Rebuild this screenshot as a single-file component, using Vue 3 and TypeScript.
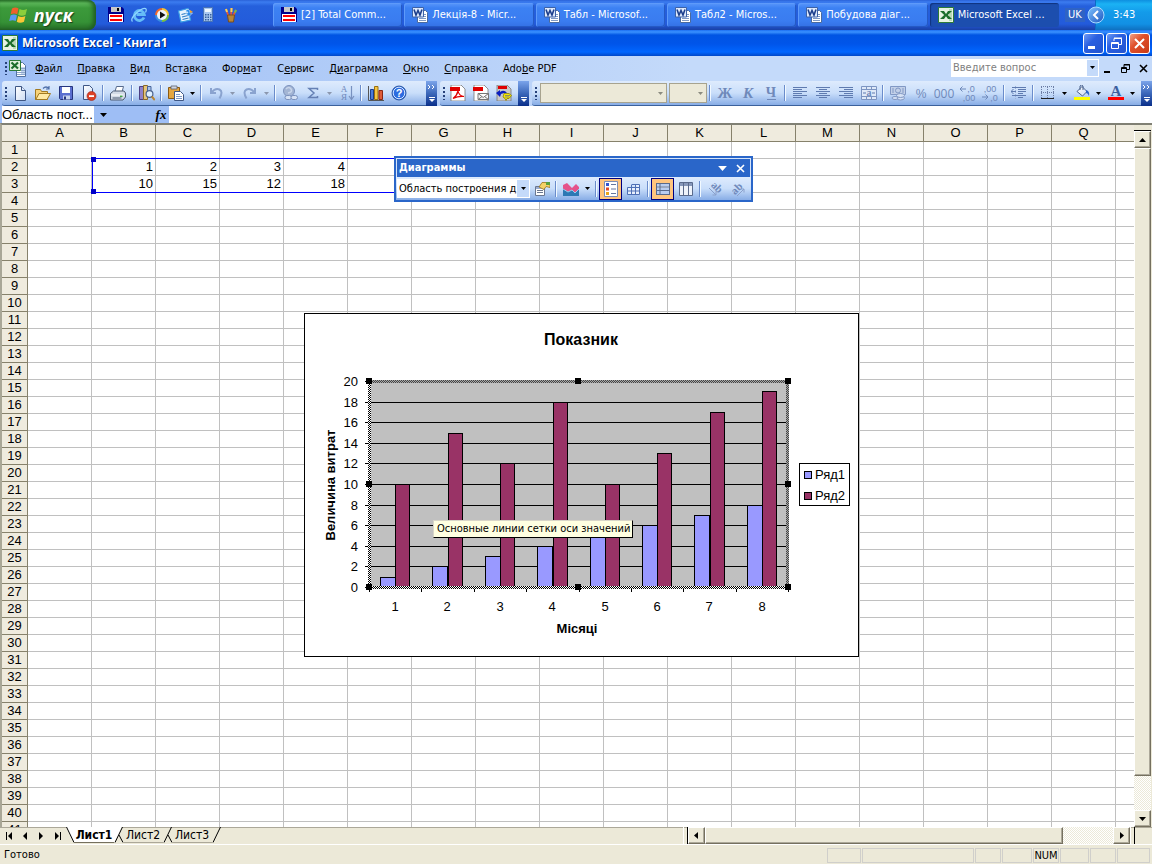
<script setup lang="ts">
import { ref } from 'vue'

interface Glyph {
  text: string
  x: number
  y: number
  size: number
  cls: string
  turn?: string
}

interface Tool {
  kind: 'icon' | 'arrow' | 'sep'
  icon?: string
  label?: string
  on?: boolean
  off?: boolean
  glyphs?: Glyph[]
}

const icon = (name: string, label: string, extra: Partial<Tool> = {}): Tool => ({ kind: 'icon', icon: name, label, ...extra })
const arrow = (label: string, off = false): Tool => ({ kind: 'arrow', label, off })
const glyph = (text: string, x: number, y: number, size: number, cls: string, turn?: string): Glyph => ({ text, x, y, size, cls, turn })
const sep: Tool = { kind: 'sep' }

const quickLaunch = [
  { icon: 'floppy', label: 'Total Commander' },
  { icon: 'ie', label: 'Internet Explorer' },
  { icon: 'media', label: 'Windows Media' },
  { icon: 'outlook', label: 'Outlook Express' },
  { icon: 'calc', label: 'Калькулятор' },
  { icon: 'paint', label: 'Paint' },
]

const tasks = [
  { icon: 'floppy', text: '[2] Total Comm...', active: false },
  { icon: 'word', text: 'Лекція-8 - Micr...', active: false },
  { icon: 'word', text: 'Табл - Microsof...', active: false },
  { icon: 'word', text: 'Табл2 - Micros...', active: false },
  { icon: 'word', text: 'Побудова діаг...', active: false },
  { icon: 'excel', text: 'Microsoft Excel ...', active: true },
]

const menus: [string, string, string][] = [
  ['', 'Ф', 'айл'],
  ['', 'П', 'равка'],
  ['', 'В', 'ид'],
  ['Вст', 'а', 'вка'],
  ['Фор', 'м', 'ат'],
  ['С', 'е', 'рвис'],
  ['Д', 'и', 'аграмма'],
  ['', 'О', 'кно'],
  ['', 'С', 'правка'],
  ['Ado', 'b', 'e PDF'],
]

const standardTools: Tool[] = [
  icon('new', 'Создать'), icon('open', 'Открыть'), icon('save', 'Сохранить'), icon('permission', 'Разрешение'), sep,
  icon('print', 'Печать'), sep, icon('research', 'Справочные материалы'), sep,
  icon('paste', 'Вставить'), arrow('Варианты вставки'), sep,
  icon('undo', 'Отменить'), arrow('Список отмены', true), icon('redo', 'Вернуть'), arrow('Список возврата', true), sep,
  icon('link', 'Гиперссылка'), icon('sum', 'Автосумма'), arrow('Функции', true),
  icon('sort', 'Сортировка', { glyphs: [glyph('А', 5, 7, 9, 'serif dim'), glyph('Я', 5, 15, 9, 'serif dim')] }), sep,
  icon('chart', 'Мастер диаграмм'), icon('help', 'Справка', { glyphs: [glyph('?', 8, 12, 11, 'sans strong white')] }),
]

const pdfTools: Tool[] = [
  icon('pdf', 'Преобразовать в PDF'), icon('pdfmail', 'Отправить PDF'), icon('pdfreview', 'Рецензировать PDF'),
]

const formatTools: Tool[] = [
  sep,
  icon('none', 'Полужирный', { glyphs: [glyph('Ж', 8, 13, 15, 'serif strong dim')] }),
  icon('none', 'Курсив', { glyphs: [glyph('К', 8, 13, 15, 'serif strong slant dim')] }),
  icon('underline', 'Подчеркнутый', { glyphs: [glyph('Ч', 8, 12, 14, 'serif strong dim')] }), sep,
  icon('left', 'По левому краю'), icon('center', 'По центру'), icon('right', 'По правому краю'),
  icon('merge', 'Объединить', { glyphs: [glyph('a', 8, 11, 10, 'serif strong dim')] }), sep,
  icon('currency', 'Денежный формат'),
  icon('none', 'Процентный формат', { glyphs: [glyph('%', 8, 13, 12, 'sans dim')] }),
  icon('none', 'Формат с разделителями', { glyphs: [glyph('000', 8, 13, 12, 'narrow dim')] }),
  icon('incdec', 'Увеличить разрядность', { glyphs: [glyph(',0', 12, 7, 9, 'sans dim'), glyph(',00', 10, 16, 9, 'sans dim')] }),
  icon('decdec', 'Уменьшить разрядность', { glyphs: [glyph(',00', 8, 7, 9, 'sans dim'), glyph(',0', 12, 16, 9, 'sans dim')] }), sep,
  icon('indent', 'Уменьшить отступ'), sep,
  icon('borders', 'Границы'), arrow('Виды границ'), icon('fill', 'Цвет заливки'), arrow('Выбор заливки'),
  icon('color', 'Цвет шрифта', { glyphs: [glyph('A', 8, 11, 15, 'serif strong navy')] }), arrow('Выбор цвета шрифта'),
]

const chartTools: Tool[] = [
  icon('format', 'Формат'), sep, icon('area', 'Тип диаграммы'), arrow('Типы'), sep,
  icon('legend', 'Легенда', { on: true }), icon('datatable', 'Таблица данных'), sep,
  icon('byrow', 'По строкам', { on: true }), icon('bycol', 'По столбцам'), sep,
  icon('textdown', 'Текст сверху вниз', { glyphs: [glyph('ab', 10, 9, 11, 'serif strong dim', 'rotate(45 9 6)')] }),
  icon('textup', 'Текст снизу вверх', { glyphs: [glyph('ab', 7, 11, 11, 'serif strong dim', 'rotate(-45 7 8)')] }),
]

const columns = 'ABCDEFGHIJKLMNOPQ'.split('')
const rowCount = 41
const cells: Record<string, number> = { B2: 1, C2: 2, D2: 3, E2: 4, B3: 10, C3: 15, D3: 12, E3: 18 }
const cell = (col: string, row: number) => cells[`${col}${row}`] ?? ''

const plot = { left: 65, top: 68, right: 484, bottom: 274 }
const series1 = [1, 2, 3, 4, 5, 6, 7, 8]
const series2 = [10, 15, 12, 18, 10, 13, 17, 19]
const ticks = [0, 2, 4, 6, 8, 10, 12, 14, 16, 18, 20]
const step = (plot.right - plot.left) / 8
const yOf = (v: number) => Math.round(plot.bottom - (v * (plot.bottom - plot.top)) / 20)
const xOf = (i: number, shift: number) => Math.round(plot.left + step * i + shift)
const handles = [0, 1, 2].flatMap((c) => [0, 1, 2].map((r) => ({
  c, r,
  x: Math.floor(plot.left + ((plot.right - plot.left) / 2) * c) - 3,
  y: Math.floor(plot.top + ((plot.bottom - plot.top) / 2) * r) - 3,
}))).filter((h) => !(h.c === 1 && h.r === 1))

const panels = [34, 112, 26, 30, 26, 29, 26, 33]
const sheets = ['Лист1', 'Лист2', 'Лист3']
const activeSheet = ref('Лист1')
const nameBox = ref('Область пост...')
</script>

<template>
  <svg class="sprite" width="0" height="0" aria-hidden="true">
    <defs>
      <linearGradient id="g-blue" x1="0" y1="0" x2="1" y2="1"><stop offset="0" stop-color="#7fc4ff" /><stop offset="1" stop-color="#1c55c0" /></linearGradient>
      <linearGradient id="g-paper" x1="0" y1="0" x2="1" y2="1"><stop offset="0" stop-color="#fff" /><stop offset="1" stop-color="#cddcf3" /></linearGradient>
    </defs>
    <symbol id="none" viewBox="0 0 16 16" />
    <symbol id="flag" viewBox="0 0 20 20">
      <path d="M3 3.500q3.500-2 6.500 0L8.200 9.300q-3-1.800-6.500 0z" fill="#f0602c" />
      <path d="M10.500 4q3.500 2 7.500 0l-1.400 5.700q-4 1.900-7.300 0z" fill="#8ccf3c" />
      <path d="M1.500 10.500q3.500-1.800 6.500 0l-1.300 5.600q-3-1.800-6.500 0z" fill="#5b98f5" />
      <path d="M9.200 11q3.300 2 7.200 0L15 16.800q-4 2-7.200 0z" fill="#fbc736" />
    </symbol>
    <symbol id="floppy" viewBox="0 0 16 16">
      <path d="M0 0h14l2 2v13H0z" fill="#00008b" /><path d="M3 0h10v5H3z" fill="#c8c8c8" /><path d="M9 1h2v3H9z" fill="#000" />
      <path d="M1 7h14v8H1z" fill="#fff" /><path d="M2 8h12v2H2zM2 12h12v2H2z" fill="#f00" />
    </symbol>
    <symbol id="ie" viewBox="0 0 16 16">
      <path d="M13 10.500a5 5 0 1 1 .3-3H5.500" fill="none" stroke="#65bdf7" stroke-width="2.800" />
      <path d="M1.500 14.500Q-1 12 5 6.500T14.500 1.500q1.500 1 0 4" fill="none" stroke="#8fd6ff" stroke-width="1.200" />
    </symbol>
    <symbol id="media" viewBox="0 0 16 16">
      <path d="M1 8a7 7 0 0 1 7-7v7z" fill="#ef6a2d" /><path d="M1 8a7 7 0 0 0 7 7V8z" fill="#3a8ee0" /><path d="M15 8a7 7 0 0 1-7 7V8z" fill="#7ac143" /><path d="M8 1a7 7 0 0 1 7 7H8z" fill="#f7c531" />
      <circle cx="8" cy="8" r="5" fill="#eef3fa" /><path d="M6 4.500v7l5.500-3.500z" fill="#111" />
    </symbol>
    <symbol id="outlook" viewBox="0 0 16 16">
      <path d="M1.500 4L11 1.500 13.500 13 4 15z" fill="#e9f4ff" stroke="#3b9fe5" stroke-width="1.200" /><path d="M4.500 7.500l6-1.500M5 10l6-1.500M5.500 12.500l6-1.500" stroke="#2f7ec5" stroke-width="1.200" />
      <path d="M9 3q4-2 4 3h2.500l-3.500 3.500L8.500 6H11q0-2-2-1z" fill="#2b8ae8" stroke="#d8eeff" stroke-width=".6" /><path d="M13 3l3 2-3 1z" fill="#f5a32a" />
    </symbol>
    <symbol id="calc" viewBox="0 0 16 16">
      <path d="M3.500.500h9v14h-9z" fill="#a9c8f0" stroke="#4a74b5" /><path d="M5 2h6v3H5z" fill="#eef8ff" />
      <path d="M5 7h1.500v1.500H5zm2.500 0H9v1.500H7.500zm2.500 0h1.500v1.500H10zM5 9.500h1.500V11H5zm2.500 0H9V11H7.500zm2.500 0h1.500V11H10zM5 12h1.500v1.500H5zm2.500 0H9v1.500H7.500zm2.500 0h1.500v1.500H10z" fill="#35609f" />
    </symbol>
    <symbol id="paint" viewBox="0 0 16 16">
      <path d="M5.500 9L3 2M8 9l.5-8M10 9l3-6" stroke="#e8573a" stroke-width="1.800" /><path d="M3 2l1 3M8.500 1v4" stroke="#f4d35b" stroke-width="2" /><path d="M13 3l-1.200 2.500" stroke="#6fbf4f" stroke-width="2" />
      <path d="M4.500 8h7l-1 7h-5z" fill="#b8863a" stroke="#7a4d1c" />
    </symbol>
    <symbol id="word" viewBox="0 0 16 16">
      <path d="M5.500 3.500h8l2 2v10h-10z" fill="#fff" stroke="#4b6a9d" /><path d="M7 11.500h7M7 13.500h7M12 7.500h2M12 9.500h2" stroke="#7e99c6" />
      <path d="M.5.500h11v9.500H.5z" fill="#dfeafc" stroke="#3c62a8" /><path d="M2 2.500l2 5.500 2-4.500L8 8l2-5.500" fill="none" stroke="#1d3f8c" stroke-width="1.600" />
    </symbol>
    <symbol id="excel" viewBox="0 0 16 16">
      <path d="M.5.500h15v15H.5z" fill="#e6f2e3" stroke="#2c7a38" /><path d="M11 2h3v12h-3z" fill="#b8d9b4" />
      <path d="M2 4h4l2 3 2-3h4L9.800 8l4.200 4h-4L8 9.300 6 12H2l4.200-4z" fill="#1c6e2c" />
    </symbol>
    <symbol id="book" viewBox="0 0 17 17">
      <path d="M7.500 2.500h6l3 3v11h-9z" fill="#fff" stroke="#51709f" /><path d="M12 7h4v8h-4z" fill="#c5d6ee" /><path d="M8 14.500h8M8 12.500h8M12 10.500h4M12 8.500h4" stroke="#8da6cb" />
      <path d="M.5.500h11v10H.5z" fill="#dff0dc" stroke="#2c7a38" /><path d="M2.500 2.500l6.500 6M9 2.500l-6.500 6" stroke="#1c6e2c" stroke-width="2.200" />
    </symbol>
    <symbol id="new" viewBox="0 0 16 16"><path d="M3.500 1.500h6l4 4v10h-10z" fill="url(#g-paper)" stroke="#3e5684" /><path d="M9.500 1.500v4h4" fill="#dce8fb" stroke="#3e5684" /></symbol>
    <symbol id="open" viewBox="0 0 16 16">
      <path d="M.5 14.500v-10h5l1 2h6v8z" fill="#f7d37a" stroke="#a27a22" /><path d="M.8 14.500L4 8.500h11.500l-3.500 6z" fill="#ffe9a4" stroke="#a27a22" /><path d="M8 3.500q3-3 6 0m0-2.500v3h-3" fill="none" stroke="#4f6fa8" stroke-width="1.200" />
    </symbol>
    <symbol id="save" viewBox="0 0 16 16">
      <path d="M1.500 1.500h13v13h-12l-1-1z" fill="#5b6fd0" stroke="#26357e" /><path d="M4 2h8v6H4z" fill="#fff" /><path d="M5 10.500h7v4H5z" fill="#c9d4ee" /><path d="M6 11.500h2v3H6z" fill="#26357e" />
    </symbol>
    <symbol id="permission" viewBox="0 0 16 16">
      <path d="M2.500.500h6l3 3v11h-9z" fill="url(#g-paper)" stroke="#3e5684" /><circle cx="10.500" cy="11" r="4.500" fill="#dd4227" stroke="#9e2410" stroke-width=".6" /><path d="M8 10.200h5v1.800H8z" fill="#fff" />
    </symbol>
    <symbol id="print" viewBox="0 0 16 16">
      <path d="M5 6.500l1.500-5h7L12 7z" fill="#fff" stroke="#576b8e" /><path d="M.5 8.500l3-2.500h10.500l1.500 2v4l-2.500 3H.5z" fill="#d3dbe6" stroke="#4a5870" /><path d="M1 10h12.500" stroke="#fff" /><path d="M2.500 13h9" stroke="#4a5870" /><path d="M10 11.300h2.500" stroke="#3fa543" stroke-width="1.400" />
    </symbol>
    <symbol id="research" viewBox="0 0 16 16">
      <path d="M.5 1.500h4v13h-4z" fill="#8f82c9" stroke="#4b3f85" /><path d="M4.500.500h4v14h-4z" fill="#e5c47c" stroke="#8a6826" /><path d="M8.500 1.500h3.500v9H8.500z" fill="#a8c3ea" stroke="#47649b" /><circle cx="10.500" cy="9" r="3.400" fill="#e0f1ff" stroke="#4b628d" stroke-width="1.200" /><path d="M12.800 11.500l3 3.500" stroke="#b98530" stroke-width="2" />
    </symbol>
    <symbol id="paste" viewBox="0 0 16 16">
      <path d="M.5 2.500h11v11H.5z" fill="#e4a640" stroke="#8a5a13" /><path d="M3 1h6v3H3z" fill="#cfd5df" stroke="#5a6170" stroke-width=".8" /><path d="M6.500 6.500h6l3 3v6h-9z" fill="#fff" stroke="#3e5684" /><path d="M8 9.500h4M8 11.500h6M8 13.500h6" stroke="#7e99c6" />
    </symbol>
    <symbol id="undo" viewBox="0 0 16 16"><path d="M3 3v5h5M3.500 7.500q4-5 8-3t0 9" fill="none" stroke="#8aa3cf" stroke-width="2" /></symbol>
    <symbol id="redo" viewBox="0 0 16 16"><path d="M13 3v5H8M12.500 7.500q-4-5-8-3t0 9" fill="none" stroke="#8aa3cf" stroke-width="2" /></symbol>
    <symbol id="link" viewBox="0 0 16 16"><circle cx="7" cy="6" r="5.500" fill="#a3b5d4" stroke="#7c92bd" /><path d="M4 4q3-3 5 0t-3 4" fill="none" stroke="#c8d5ea" stroke-width="1.500" /><rect x="3" y="10.500" width="6.500" height="4" rx="2" fill="#d6e2f5" stroke="#7c92bd" /><rect x="9" y="10.500" width="6.500" height="4" rx="2" fill="#d6e2f5" stroke="#7c92bd" /></symbol>
    <symbol id="sum" viewBox="0 0 16 16"><path d="M12.500 5V3.500H4L9 8l-5 4.500h8.500V11" fill="none" stroke="#6580b4" stroke-width="1.500" /></symbol>
    <symbol id="sort" viewBox="0 0 16 16"><path d="M12.500 1v13M10 11l2.500 3.500L15 11" fill="none" stroke="#7891bf" stroke-width="1.200" /></symbol>
    <symbol id="chart" viewBox="0 0 16 16"><path d="M.5 1v14.500H16" fill="none" stroke="#555" /><path d="M2.500 4.500h3v10h-3z" fill="#4a7bd8" stroke="#1d3f8c" /><path d="M6.500 1.500h3.500v13H6.500z" fill="#f5c544" stroke="#99700f" /><path d="M11 5.500h3.500v9H11z" fill="#de5c3a" stroke="#8b2612" /></symbol>
    <symbol id="help" viewBox="0 0 16 16"><circle cx="8" cy="8" r="7" fill="#2c6ce0" stroke="#17418f" stroke-width=".8" /><circle cx="8" cy="8" r="5.800" fill="none" stroke="#d6e7ff" /></symbol>
    <symbol id="pdf" viewBox="0 0 16 16"><path d="M1 0h10l4 4v12H1z" fill="#fff" stroke="#777" stroke-width=".8" /><path d="M0 2h10v4H0z" fill="#e00000" /><path d="M3 13.500q4-3 5-7.500 1 5 6 5.500-6-.5-11 2z" fill="none" stroke="#e00000" stroke-width="1.200" /></symbol>
    <symbol id="pdfmail" viewBox="0 0 16 16"><path d="M1 0h10l4 4v12H1z" fill="#fff" stroke="#777" stroke-width=".8" /><path d="M0 2h10v4H0z" fill="#e00000" /><path d="M5 8.500h10.500v6H5zm0 0l5.200 4 5.300-4M5 14.500l4-3m6.500 3l-4-3" fill="#f4f4f4" stroke="#777" /></symbol>
    <symbol id="pdfreview" viewBox="0 0 16 16"><path d="M1 0h10l4 4v12H1z" fill="#c9c9c9" stroke="#777" stroke-width=".8" /><path d="M2 1h9v3H2z" fill="#e00000" /><path d="M0 8l4-3v2q4-3 7 1-3-.5-6 1l-1 3z" fill="#0a1ec0" /><path d="M8 8.500h5l2.500 2-2.500 3h-2l-1 2-1-2-2-1.500z" fill="#f7ea00" stroke="#8a8000" stroke-width=".8" /><path d="M9 10.500h5M9 12h4" stroke="#777" stroke-width=".8" /></symbol>
    <symbol id="underline" viewBox="0 0 16 16"><path d="M4 14.500h9" stroke="#6f89ba" /></symbol>
    <symbol id="left" viewBox="0 0 16 16"><path d="M1 2.500h14M1 4.500h9M1 6.500h14M1 8.500h9M1 10.500h14M1 12.500h9" stroke="#5f7bb0" /></symbol>
    <symbol id="center" viewBox="0 0 16 16"><path d="M1 2.500h14M4 4.500h8M1 6.500h14M4 8.500h8M1 10.500h14M4 12.500h8" stroke="#5f7bb0" /></symbol>
    <symbol id="right" viewBox="0 0 16 16"><path d="M1 2.500h14M6 4.500h9M1 6.500h14M6 8.500h9M1 10.500h14M6 12.500h9" stroke="#5f7bb0" /></symbol>
    <symbol id="merge" viewBox="0 0 16 16"><path d="M.5 1.500h15v13H.5zM.5 4.500h15M.5 11.500h15M5.500 1.500v3M10.500 1.500v3M5.500 11.500v3M10.500 11.500v3" fill="#dfe9f8" stroke="#7d95c2" /><path d="M2 8h3M11 8h3" stroke="#5f7bb0" /></symbol>
    <symbol id="currency" viewBox="0 0 16 16"><path d="M.5 1.500h15v8H.5z" fill="#c2d0e8" stroke="#8198c4" /><circle cx="8" cy="5.500" r="2.500" fill="none" stroke="#8198c4" /><path d="M3 3v5M13 3v5" stroke="#8198c4" /><ellipse cx="10.500" cy="13" rx="4" ry="2" fill="#d6e2f5" stroke="#8198c4" /><ellipse cx="10.500" cy="10.500" rx="4" ry="2" fill="#d6e2f5" stroke="#8198c4" /><ellipse cx="5" cy="13" rx="3" ry="1.500" fill="#d6e2f5" stroke="#8198c4" /></symbol>
    <symbol id="incdec" viewBox="0 0 16 16"><path d="M7 4H1m2.500-2.500L1 4l2.500 2.500" fill="none" stroke="#6f89ba" /></symbol>
    <symbol id="decdec" viewBox="0 0 16 16"><path d="M0 12h6M3.500 9.500L6 12l-2.500 2.500" fill="none" stroke="#6f89ba" /></symbol>
    <symbol id="indent" viewBox="0 0 16 16"><path d="M1 2.500h14M7 4.500h8M7 6.500h8M7 8.500h5M1 10.500h14M7 12.500h5M5 6.500H0m2.500-2.500L0 6.500 2.500 9" fill="none" stroke="#5f7bb0" /><path d="M4.500 1v14" stroke="#9db1d6" stroke-dasharray="1 1" /></symbol>
    <symbol id="borders" viewBox="0 0 16 16"><path d="M1.500 2v12M7.500 2v12M13.500 2v12M1 1.500h13M1 7.500h13" stroke="#6d7ea6" stroke-dasharray="1 1" /><path d="M1 13.500h13" stroke="#222" /></symbol>
    <symbol id="fill" viewBox="0 0 16 16"><path d="M3 6.500L8 1.500l5 5-4.500 4.500z" fill="url(#g-paper)" stroke="#4b628d" /><path d="M6 5V1q1.500-2 3 0v4" fill="none" stroke="#4b628d" /><path d="M12 5q4 1 3 6-1-3-3-3z" fill="#2d66c8" /><path d="M0 12h16v3H0z" fill="#ff0" /></symbol>
    <symbol id="color" viewBox="0 0 16 16"><path d="M0 12h16v3H0z" fill="#f00" /></symbol>
    <symbol id="format" viewBox="0 0 16 16"><path d="M1.500 5.500h9v9h-9z" fill="#fff" stroke="#6a7690" /><path d="M2 6h8v2H2z" fill="#9badd0" /><path d="M3 9.500h6M3 11.500h6" stroke="#6a7690" /><path d="M5 6l3-4.500h6l2 2v3l-4-1-2 3-2-1z" fill="#f4d267" stroke="#9a741a" stroke-width=".8" /><path d="M12 1h4v3h-4z" fill="#58a13d" /></symbol>
    <symbol id="area" viewBox="0 0 16 16"><path d="M0 14V4l4-2 5 5 4-4 3 3v8z" fill="#e5538a" /><path d="M0 15V8l5 3 4-2 3 3 4-4v7z" fill="#2d78b4" /><path d="M0 8l5 3 4-2 3 3 4-4" fill="none" stroke="#8fd0ef" /></symbol>
    <symbol id="legend" viewBox="0 0 16 16"><path d="M1.500.500h13v15h-13z" fill="#fff" stroke="#7b8db5" /><path d="M3 2h3v3H3z" fill="#3454d1" /><path d="M3 6.500h3v3H3z" fill="#e04a2b" /><path d="M3 11h3v3H3z" fill="#e9a31b" /><path d="M8 3.500h5M8 8h5M8 12.500h5" stroke="#66779e" /></symbol>
    <symbol id="datatable" viewBox="0 0 16 16"><path d="M5.500 3.500h8v10h-12v-7h12M1.500 10h12M5.500 4v9.500M9.500 3.500v10" fill="#e8f0fd" stroke="#4d6fb5" /></symbol>
    <symbol id="byrow" viewBox="0 0 16 16"><path d="M1.500 2.500h13v11h-13z" fill="#fff" stroke="#596a8c" /><path d="M2 3h12v2.500H2zM2 6.500h12v2.500H2zM2 10h12v3H2z" fill="#b9cdf0" /><path d="M1 2.500h14M1 6h14M1 9.500h14M1 13.500h14M5 2v12" stroke="#596a8c" /></symbol>
    <symbol id="bycol" viewBox="0 0 16 16"><path d="M1.500 1.500h13v13h-13z" fill="#eef3fb" stroke="#596a8c" /><path d="M2 2h12v3H2z" fill="#8698bb" /><path d="M5.500 1v14M10.500 1v14" stroke="#596a8c" /></symbol>
    <symbol id="textdown" viewBox="0 0 16 16"><path d="M2 7l7 7m0-3.500V14H5.500" fill="none" stroke="#8aa0cb" /></symbol>
    <symbol id="textup" viewBox="0 0 16 16"><path d="M7 15l7-7m-3.500 0H14v3.500" fill="none" stroke="#8aa0cb" /></symbol>
    <symbol id="down" viewBox="0 0 7 4"><path d="M0 0h7L3.500 4z" fill="currentColor" /></symbol>
  </svg>

  <div class="desktop">
    <header class="taskbar">
      <button class="start" type="button"><svg width="20" height="20"><use href="#flag" /></svg><span>пуск</span></button>
      <nav class="quick">
        <button v-for="q in quickLaunch" :key="q.icon" type="button" :aria-label="q.label"><svg width="16" height="16"><use :href="`#${q.icon}`" /></svg></button>
      </nav>
      <div class="tasks">
        <button v-for="t in tasks" :key="t.text" type="button" class="task" :class="{ active: t.active }">
          <svg width="16" height="16"><use :href="`#${t.icon}`" /></svg><span>{{ t.text }}</span>
        </button>
      </div>
      <div class="lang"><span>UK</span></div>
      <div class="tray">
        <button class="expand" type="button" aria-label="Показать значки"><svg width="18" height="18" viewBox="0 0 18 18"><circle cx="9" cy="9" r="8" fill="url(#g-blue)" stroke="#a9dcff" /><path d="M11 5L7 9l4 4" fill="none" stroke="#fff" stroke-width="2" /></svg></button>
        <time>3:43</time>
      </div>
    </header>

    <div class="titlebar">
      <svg width="16" height="16"><use href="#excel" /></svg>
      <h1>Microsoft Excel - Книга1</h1>
      <div class="winbtns">
        <button type="button" aria-label="Свернуть"><svg width="19" height="19"><path d="M4 12h7v3H4z" fill="#fff" /></svg></button>
        <button type="button" aria-label="Восстановить"><svg width="19" height="19" fill="none" stroke="#fff"><path d="M7 7V4.500h7.500v6H12M7 4h8M4.500 8.500h7v6h-7zM4 9.500h8" /></svg></button>
        <button class="close" type="button" aria-label="Закрыть"><svg width="19" height="19"><path d="M5 5l9 9M14 5l-9 9" stroke="#fff" stroke-width="2" /></svg></button>
      </div>
    </div>

    <div class="menubar">
      <i class="grip"></i>
      <svg class="book" width="17" height="17"><use href="#book" /></svg>
      <nav class="menus">
        <button v-for="m in menus" :key="m.join('')" type="button">{{ m[0] }}<u>{{ m[1] }}</u>{{ m[2] }}</button>
      </nav>
      <div class="ask">
        <input type="text" placeholder="Введите вопрос" aria-label="Введите вопрос" />
        <button type="button" aria-label="Список вопросов"><svg width="5" height="3"><use href="#down" /></svg></button>
      </div>
      <div class="docbtns">
        <button type="button" aria-label="Свернуть книгу"><svg width="9" height="9"><path d="M1 7h6v2H1z" /></svg></button>
        <button type="button" aria-label="Восстановить книгу"><svg width="9" height="9" fill="none" stroke="#000"><path d="M3 3V.500h5.500v5H6M3 1h6M.5 3.500h5v5h-5zM0 4.500h6" /></svg></button>
        <button type="button" aria-label="Закрыть книгу"><svg width="9" height="9"><path d="M1 1l7 7M8 1L1 8" stroke="#000" stroke-width="1.600" /></svg></button>
      </div>
    </div>

    <div class="toolbars">
      <div class="toolbar">
        <i class="grip"></i>
        <template v-for="(t, i) in standardTools" :key="i">
          <i v-if="t.kind === 'sep'" class="sep"></i>
          <button v-else type="button" :class="[t.kind, { off: t.off }]" :aria-label="t.label">
            <svg v-if="t.icon" width="16" height="16"><use :href="`#${t.icon}`" /><text v-for="g in t.glyphs" :key="g.text" :x="g.x" :y="g.y" :font-size="g.size" :class="g.cls" text-anchor="middle">{{ g.text }}</text></svg>
            <svg v-else width="5" height="3"><use href="#down" /></svg>
          </button>
        </template>
        <button class="more first" type="button" aria-label="Параметры панели"><svg width="8" height="20" fill="none" stroke="#fff"><path d="M0 2l2 2-2 2M4 2l2 2-2 2M1 14.500h6" /><path d="M1 16h6l-3 3z" fill="#fff" stroke="none" /></svg></button>
      </div>
      <div class="toolbar">
        <i class="grip"></i>
        <button v-for="t in pdfTools" :key="t.icon" type="button" class="icon" :aria-label="t.label"><svg width="16" height="16"><use :href="`#${t.icon}`" /></svg></button>
        <button class="more" type="button" aria-label="Параметры панели"><svg width="8" height="20" fill="none" stroke="#fff"><path d="M1 14.500h6" /><path d="M1 16h6l-3 3z" fill="#fff" stroke="none" /></svg></button>
      </div>
      <div class="toolbar wide">
        <i class="grip"></i>
        <span class="combo font"><select disabled aria-label="Шрифт"></select><svg width="5" height="3"><use href="#down" /></svg></span>
        <span class="combo size"><select disabled aria-label="Размер"></select><svg width="5" height="3"><use href="#down" /></svg></span>
        <template v-for="(t, i) in formatTools" :key="i">
          <i v-if="t.kind === 'sep'" class="sep"></i>
          <button v-else type="button" :class="[t.kind, { off: t.off }]" :aria-label="t.label">
            <svg v-if="t.icon" width="16" height="16"><use :href="`#${t.icon}`" /><text v-for="g in t.glyphs" :key="g.text" :x="g.x" :y="g.y" :font-size="g.size" :class="g.cls" text-anchor="middle">{{ g.text }}</text></svg>
            <svg v-else width="5" height="3"><use href="#down" /></svg>
          </button>
        </template>
        <button class="more last" type="button" aria-label="Параметры панели"><svg width="8" height="20" fill="none" stroke="#fff"><path d="M0 2l2 2-2 2M4 2l2 2-2 2M1 14.500h6" /><path d="M1 16h6l-3 3z" fill="#fff" stroke="none" /></svg></button>
      </div>
    </div>

    <div class="formula">
      <input v-model="nameBox" class="namebox" type="text" aria-label="Имя" />
      <button class="namedrop" type="button" aria-label="Список имен"><svg width="7" height="4"><use href="#down" /></svg></button>
      <button class="fx" type="button" aria-label="Вставка функции">fx</button>
      <input class="entry" type="text" aria-label="Строка формул" />
    </div>

    <main class="sheet">
      <div class="canvas">
        <table>
          <colgroup><col class="rowcol" /><col v-for="c in columns" :key="c" class="datacol" /><col /></colgroup>
          <thead>
            <tr><th></th><th v-for="c in columns" :key="c" scope="col">{{ c }}</th><th></th></tr>
          </thead>
          <tbody>
            <tr v-for="r in rowCount" :key="r">
              <th scope="row">{{ r }}</th>
              <td v-for="c in columns" :key="c">{{ cell(c, r) }}</td>
              <td></td>
            </tr>
          </tbody>
        </table>

        <div class="range"></div>

        <svg class="chart" width="555" height="344" role="img" aria-label="Показник">
          <defs>
            <pattern id="hatch" width="2" height="2" patternUnits="userSpaceOnUse"><path d="M0 0h1v1H0zM1 1h1v1H1z" fill="#000" /></pattern>
            <pattern id="hatchgrey" width="2" height="2" patternUnits="userSpaceOnUse"><rect width="2" height="2" fill="#a8a8a8" /><path d="M0 0h1v1H0zM1 1h1v1H1z" fill="#444" /></pattern>
          </defs>
          <rect x=".5" y=".5" width="554" height="343" fill="#fff" stroke="#000" />
          <text class="title" x="277" y="32" text-anchor="middle">Показник</text>
          <rect :x="plot.left" :y="plot.top" :width="plot.right - plot.left" :height="plot.bottom - plot.top" fill="#c0c0c0" />
          <g v-for="t in ticks" :key="t">
            <rect :x="plot.left - 4" :y="yOf(t)" :width="t === 0 || t === 20 ? 4 : plot.right - plot.left + 4" height="1" />
            <text class="axis" x="54" :y="yOf(t) + 5" text-anchor="end">{{ t }}</text>
          </g>
          <g v-for="(v, i) in series1" :key="i">
            <rect :x="xOf(i, 11) + 0.5" :y="yOf(v) + 0.5" width="15" :height="plot.bottom - yOf(v)" fill="#9999ff" stroke="#000" />
            <rect :x="xOf(i, 26.4) + 0.5" :y="yOf(series2[i]) + 0.5" width="14" :height="plot.bottom - yOf(series2[i])" fill="#993366" stroke="#000" />
            <text class="axis" :x="xOf(i, 26)" y="298" text-anchor="middle">{{ i + 1 }}</text>
          </g>
          <rect v-for="i in 9" :key="i" :x="xOf(i - 1, 0)" :y="plot.bottom" width="1" height="5" />
          <rect :x="plot.left - 1" :y="plot.top - 1" width="420" height="3" fill="url(#hatchgrey)" />
          <rect :x="plot.right - 2" :y="plot.top - 1" width="3" height="207" fill="url(#hatchgrey)" />
          <rect :x="plot.left - 1" :y="plot.top" width="3" height="206" fill="#fff" />
          <rect :x="plot.left - 1" :y="plot.top" width="3" height="206" fill="url(#hatch)" />
          <rect :x="plot.left - 1" :y="plot.bottom - 1" width="420" height="3" fill="#fff" />
          <rect :x="plot.left - 1" :y="plot.bottom - 1" width="420" height="3" fill="url(#hatch)" />
          <rect v-for="h in handles" :key="`${h.c}${h.r}`" :x="h.x" :y="h.y" width="6" height="6" />
          <text class="caption" x="273" y="320" text-anchor="middle">Місяці</text>
          <text class="caption" x="0" y="0" text-anchor="middle" transform="translate(31 172) rotate(-90)">Величина витрат</text>
          <rect x="495.500" y="150.500" width="50" height="42" fill="#fff" stroke="#000" />
          <rect x="500.500" y="158.500" width="7" height="7" fill="#9999ff" stroke="#000" />
          <rect x="500.500" y="179.500" width="7" height="7" fill="#993366" stroke="#000" />
          <text class="axis" x="511" y="166">Ряд1</text>
          <text class="axis" x="511" y="187">Ряд2</text>
        </svg>

        <div class="tip" role="tooltip">Основные линии сетки оси значений</div>

        <section class="floatbar" aria-label="Диаграммы">
          <div class="floathead">
            <h2>Диаграммы</h2>
            <button type="button" aria-label="Параметры панели"><svg width="9" height="5"><use href="#down" /></svg></button>
            <button type="button" aria-label="Закрыть панель"><svg width="9" height="9"><path d="M1 1l7 7M8 1L1 8" stroke="#fff" stroke-width="1.600" /></svg></button>
          </div>
          <div class="floatbody">
            <span class="combo element"><select aria-label="Элементы диаграммы"><option>Область построения д</option></select><svg width="5" height="3"><use href="#down" /></svg></span>
            <template v-for="(t, i) in chartTools" :key="i">
              <i v-if="t.kind === 'sep'" class="sep"></i>
              <button v-else type="button" :class="[t.kind, { on: t.on }]" :aria-label="t.label">
                <svg v-if="t.icon" width="16" height="16"><use :href="`#${t.icon}`" /><text v-for="g in t.glyphs" :key="g.text" :x="g.x" :y="g.y" :font-size="g.size" :class="g.cls" :transform="g.turn" text-anchor="middle">{{ g.text }}</text></svg>
                <svg v-else width="5" height="3"><use href="#down" /></svg>
              </button>
            </template>
          </div>
        </section>
      </div>

      <div class="vscroll">
        <i class="vsplit"></i>
        <button type="button" aria-label="Вверх"><svg width="7" height="4" viewBox="0 0 7 4"><path d="M0 4h7L3.500 0z" /></svg></button>
        <i class="thumb"></i>
        <i class="rest"></i>
        <button type="button" aria-label="Вниз"><svg width="7" height="4"><use href="#down" /></svg></button>
      </div>
    </main>

    <div class="bottom">
      <div class="nav">
        <button type="button" aria-label="Первый лист"><svg width="7" height="8"><path d="M0 0h1v8H0zM6 0v8L2 4z" /></svg></button>
        <button type="button" aria-label="Предыдущий лист"><svg width="7" height="8"><path d="M5 0v8L1 4z" /></svg></button>
        <button type="button" aria-label="Следующий лист"><svg width="7" height="8"><path d="M1 0v8l4-4z" /></svg></button>
        <button type="button" aria-label="Последний лист"><svg width="7" height="8"><path d="M6 0h1v8H6zM1 0v8l4-4z" /></svg></button>
      </div>
      <svg width="8" height="16"><path d="M0 0h8v16z" fill="#fff" /><path d="M.5 0L8 15.500" stroke="#000" /></svg>
      <template v-for="(s, i) in sheets" :key="s">
        <button type="button" class="tab" :class="{ active: s === activeSheet }" @click="activeSheet = s">{{ s }}</button>
        <svg width="9" height="16"><path v-if="i === 0" d="M0 0h8L0 16z" fill="#fff" /><path d="M8.500 0L1 15.500" stroke="#000" /><path v-if="i < 2" d="M5 8l4 7.500" stroke="#000" /></svg>
      </template>
      <div class="gap"></div>
      <div class="hscroll">
        <i class="split"></i>
        <button type="button" aria-label="Влево"><svg width="4" height="7"><path d="M4 0v7L0 3.500z" /></svg></button>
        <i class="thumb"></i>
        <i class="rest"></i>
        <button type="button" aria-label="Вправо"><svg width="4" height="7"><path d="M0 0v7l4-3.500z" /></svg></button>
        <i class="split"></i>
      </div>
    </div>

    <footer class="status">
      <span class="ready">Готово</span>
      <span v-for="(w, i) in panels" :key="i" class="panel" :style="{ width: `${w}px` }">{{ i === 4 ? 'NUM' : '' }}</span>
    </footer>
  </div>
</template>

<style>
html, body { margin: 0; background: #ece9d8; }
</style>

<style scoped>
.desktop { display: flex; flex-direction: column; height: 100vh; min-height: 400px; overflow: hidden; font: 11px/14px "DejaVu Sans Condensed", "DejaVu Sans", sans-serif; color: #000; background: #ece9d8; }
.sprite { position: absolute; }
.serif { font-family: "Liberation Serif", serif; }
.sans { font-family: "Liberation Sans", sans-serif; }
.narrow { font-family: "Liberation Sans Narrow", "Open Sans", sans-serif; }
.strong { font-weight: 700; }
.slant { font-style: italic; }
.dim { fill: #6f89ba; }
.navy { fill: #3c5f9f; }
.white { fill: #fff; }
* { box-sizing: border-box; }
button { display: flex; align-items: center; justify-content: center; flex: none; margin: 0; padding: 0; border: 0; background: none; font: inherit; color: inherit; white-space: nowrap; }
input, select { margin: 0; padding: 0; border: 0; border-radius: 0; outline: 0; font: inherit; color: inherit; min-width: 0; }
svg { flex: none; display: block; overflow: visible; }
i { display: block; flex: none; }

.taskbar { display: flex; flex: none; height: 30px; background: linear-gradient(#2a62d8 0, #3b7cf0 2px, #2560dc 6px, #235bdb 24px, #1d49b8 28px, #1941a5 30px); color: #fff; }
.start { width: 96px; gap: 5px; padding: 0 14px 0 0; border-radius: 0 8px 8px 0; background: linear-gradient(#2f7f2f 0, #5cb85a 3px, #3c9a3b 8px, #369236 22px, #2a772c 28px, #235f25 30px); box-shadow: inset -3px 0 4px #205c22; font: italic 700 18px/24px "Open Sans", "Noto Sans", sans-serif; text-shadow: 1px 1px 1px #173f19; }
.quick { display: flex; width: 176px; padding: 0 0 0 8px; }
.quick button { width: 23px; height: 30px; }
.tasks { display: flex; flex: 1; gap: 2px; padding: 3px 0 3px 1px; min-width: 0; }
.task { flex: 1 1 0; min-width: 0; justify-content: flex-start; gap: 4px; padding: 0 8px; border-radius: 3px; background: linear-gradient(#5a97fb, #3c81f3 5px, #3a7cf0 18px, #3470e4); box-shadow: inset 1px 1px 0 #5e9afa, inset -1px -1px 0 #2559c4; }
.task.active { background: #1c4eae; box-shadow: inset 1px 1px 1px #10337e; }
.lang { display: flex; align-items: center; flex: none; width: 36px; padding-left: 6px; }
.lang span { padding: 0 3px; background: #2f63c4; }
.tray { display: flex; align-items: center; flex: none; width: 57px; gap: 8px; background: linear-gradient(#0e8fe0, #1bb2f4 4px, #139bea 12px, #1290e4 24px, #0f70c0); box-shadow: inset 1px 0 0 #0d6bc4; }
.expand { margin-left: -8px; }

.titlebar { display: flex; align-items: center; flex: none; height: 26px; padding: 0 2px; gap: 4px; background: linear-gradient(#1c6ff2 0, #3a92ff 2px, #0054e3 5px, #0055ea 14px, #0066ff 22px, #0047c8 26px); color: #fff; }
.titlebar h1 { flex: 1; margin: 0; font: 700 12px/16px "Open Sans", "Noto Sans", sans-serif; text-shadow: 1px 1px 0 #0a2a7c; }
.winbtns { display: flex; gap: 2px; }
.winbtns button { width: 21px; height: 21px; border: 1px solid #fff; border-radius: 3px; background: linear-gradient(135deg, #6f9bf5, #2a5fe0 40%, #2354cf); }
.winbtns .close { background: linear-gradient(135deg, #f0a088, #e0502c 40%, #c93a16); }

.menubar { display: flex; align-items: center; flex: none; height: 25px; padding-left: 2px; background: linear-gradient(90deg, #9ebef5, #c4dafa 60%); }
.grip { width: 6px; height: 13px; background: repeating-linear-gradient(#27417a 0 2px, transparent 2px 4px) 3px 0 / 2px 100% no-repeat; }
.book { margin-left: 1px; }
.menus { display: flex; flex: 1; gap: 15px; padding-left: 9px; }
.ask { display: flex; flex: none; width: 148px; height: 18px; margin-bottom: 2px; background: #fff; }
.ask input { flex: 1; padding: 0 2px; background: #fff; }
.ask input::placeholder { color: #808080; opacity: 1; }
.ask button { width: 11px; margin: 1px; background: #c4dafa; }
.docbtns { display: flex; flex: none; gap: 9px; padding: 0 4px 0 4px; }

.toolbars { display: flex; flex: none; height: 25px; gap: 3px; padding: 0 0 0 2px; background: linear-gradient(90deg, #9ebef5, #c4dafa 60%); }
.toolbar { display: flex; align-items: center; flex: none; border-bottom: 1px solid #3b619c; border-radius: 3px 0 0 3px; background: linear-gradient(#deebfd, #c9defa 50%, #88ade6); }
.toolbar.wide { flex: 1; min-width: 0; }
.icon { width: 23px; height: 22px; }
.arrow { width: 11px; height: 22px; }
.off { color: #8b97ae; }
.sep { width: 6px; height: 16px; background: linear-gradient(90deg, transparent 2px, #6a8ccb 2px 3px, #f1f9ff 3px 4px, transparent 4px); }
.more { width: 11px; height: 25px; margin-left: 3px; background: linear-gradient(#7ba4ea, #3b67b9 50%, #0a2f8a); }
.more.first { margin-left: 16px; }
.more.last { margin-left: auto; }
.combo { display: inline-grid; align-items: center; flex: none; }
.combo > * { grid-area: 1 / 1; }
.combo > svg { justify-self: end; margin-right: 4px; color: #8b8b80; pointer-events: none; }
.combo select { width: 100%; height: 100%; appearance: none; border: 1px solid #a7a38f; background: #ece9d8; opacity: 1; }
.font { width: 127px; height: 20px; margin-left: 2px; }
.size { width: 38px; height: 20px; margin-left: 2px; }

.formula { display: flex; flex: none; height: 17px; padding-left: 2px; background: #9ebef5; font: 13px/16px "Liberation Sans", Arial, sans-serif; }
.namebox { width: 92px; background: #fff; }
.namedrop { width: 18px; }
.fx { width: 30px; margin-left: 27px; padding-left: 14px; font: italic 700 13px/16px "Liberation Serif", serif; }
.entry { flex: 1; background: #fff; }

.sheet { display: flex; flex: 1; min-height: 0; border-top: 2px solid #808074; border-left: 2px solid #a9a797; overflow: hidden; }
.canvas { position: relative; flex: 1; min-width: 0; overflow: hidden; background: #fff; }
table { width: 100%; table-layout: fixed; border-collapse: separate; border-spacing: 0; font: 13px/16px "Liberation Sans", Arial, sans-serif; }
.rowcol { width: 26px; }
.datacol { width: 64px; }
tr { height: 17px; }
th, td { height: 17px; padding: 0 2px; border-right: 1px solid #c0c0c0; border-bottom: 1px solid #c0c0c0; font-weight: 400; text-align: right; }
th { padding: 0; text-align: center; background: #efebde; border-color: #86816b; }
tr > :last-child { border-right: 0; }
.range { position: absolute; left: 90px; top: 33px; width: 513px; height: 35px; border: 1px solid #0000ff; }
.range::before, .range::after { content: ""; position: absolute; left: -2px; width: 5px; height: 5px; background: #0000c8; }
.range::before { top: -2px; }
.range::after { bottom: -2px; }

.chart { position: absolute; left: 302px; top: 188px; font-family: "Liberation Sans", Arial, sans-serif; shape-rendering: crispEdges; }
.title { font-size: 16px; font-weight: 700; }
.axis { font-size: 13px; }
.caption { font-size: 13px; font-weight: 700; }
.tip { position: absolute; left: 431px; top: 395px; padding: 1px 2px 1px 3px; white-space: nowrap; background: #ffffe1; border: 1px solid #000; border-top-color: #d8d5c8; border-left-color: #d8d5c8; }

.floatbar { position: absolute; left: 392px; top: 31px; width: 359px; border: 2px solid #2a66c9; background: #2a66c9; }
.floathead { display: flex; align-items: center; gap: 9px; height: 19px; padding: 0 5px 0 2px; border: solid #d5e4fa; border-width: 1px 1px 0; color: #fff; }
.floathead h2 { flex: 1; margin: 0; font-size: 11px; line-height: 14px; font-weight: 700; }
.floatbody { display: flex; align-items: center; height: 23px; padding-left: 1px; background: linear-gradient(#deebfd, #c9defa 50%, #88ade6); }
.element { width: 133px; height: 19px; }
.element select { border-color: #fff; background: linear-gradient(90deg, #fff 119px, #c4dafa 119px); padding-left: 1px; }
.element > svg { color: #000; }
.on { background: #ffc57e; border: 1px solid #000080; }

.vscroll { display: flex; flex-direction: column; flex: none; width: 18px; padding-right: 1px; background: #ece9d8; }
.vscroll button { height: 17px; }
.vsplit { height: 6px; border-bottom: 1px solid #000; }
.vscroll button, .hscroll button, .thumb { background: #ece9d8; border: 1px solid; border-color: #fff #75705f #75705f #fff; box-shadow: inset -1px -1px 0 #aca899; }
.rest { background: repeating-conic-gradient(#fff 0 25%, #ece9d8 0 50%) 0 0 / 2px 2px; }
.vscroll .thumb { flex: 629 1 0; }
.vscroll .rest { flex: 34 1 0; }

.bottom { display: flex; flex: none; height: 17px; padding: 0 1px 0 2px; box-shadow: inset 0 1px 0 #aca899; }
.bottom > svg { height: 16px; fill: none; }
.nav { display: flex; width: 64px; padding-right: 1px; }
.nav button { flex: 1; }
.tab { width: 40px; height: 16px; border-bottom: 1px solid #aca899; border-top: 1px solid #aca899; font-size: 12px; }
.tab.active { background: #fff; border-color: #fff; border-bottom-color: #75705f; font-weight: 700; }
.gap { flex: 461; }
.hscroll { display: flex; flex: 452; margin-right: 16px; }
.hscroll button { width: 17px; }
.hscroll .thumb { flex: 359 1 0; }
.hscroll .rest { flex: 50 1 0; }
.split { width: 5px; border-left: 1px solid #fff; border-right: 1px solid #000; }

.status { display: flex; flex: none; gap: 1px; height: 20px; padding: 3px 2px 1px 4px; border-top: 1px solid #fff; }
.ready { flex: 1; }
.panel { flex: none; height: 15px; border: 1px solid #d0cfcb; text-align: center; line-height: 13px; }
</style>
